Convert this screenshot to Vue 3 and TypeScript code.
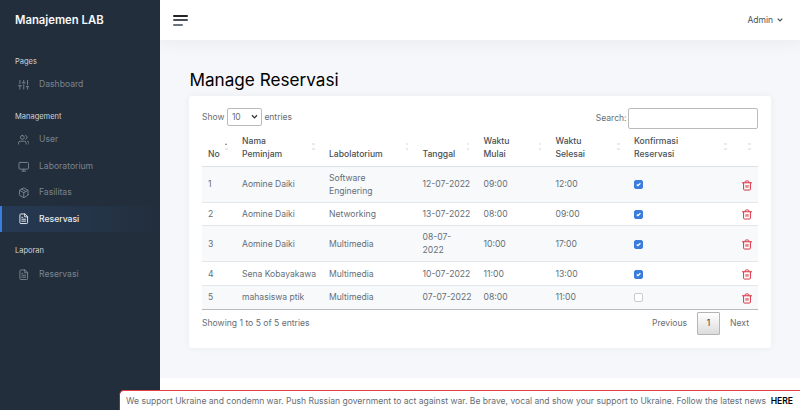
<script setup lang="ts">
type IconName = 'sliders' | 'users' | 'monitor' | 'box' | 'file'

interface NavItem {
  label: string
  icon: IconName
  active?: boolean
}

interface NavGroup {
  title: string
  items: NavItem[]
}

interface Reservation {
  no: number
  name: string
  lab: string
  date: string
  start: string
  end: string
  confirmed: boolean
}

const groups: NavGroup[] = [
  { title: 'Pages', items: [{ label: 'Dashboard', icon: 'sliders' }] },
  {
    title: 'Management',
    items: [
      { label: 'User', icon: 'users' },
      { label: 'Laboratorium', icon: 'monitor' },
      { label: 'Fasilitas', icon: 'box' },
      { label: 'Reservasi', icon: 'file', active: true },
    ],
  },
  { title: 'Laporan', items: [{ label: 'Reservasi', icon: 'file' }] },
]

const icons: Record<IconName, string[]> = {
  sliders: ['M4 21v-7M4 10V3M12 21v-9M12 8V3M20 21v-5M20 12V3M1 14h6M9 8h6M17 16h6'],
  users: [
    'M17 21v-2a4 4 0 0 0-4-4H5a4 4 0 0 0-4 4v2',
    'M9 3a4 4 0 1 0 0 8a4 4 0 1 0 0-8z',
    'M23 21v-2a4 4 0 0 0-3-3.87M16 3.13a4 4 0 0 1 0 7.75',
  ],
  monitor: ['M4 3h16a2 2 0 0 1 2 2v10a2 2 0 0 1-2 2H4a2 2 0 0 1-2-2V5a2 2 0 0 1 2-2z', 'M8 21h8M12 17v4'],
  box: [
    'M16.5 9.4l-9-5.19',
    'M21 16V8a2 2 0 0 0-1-1.73l-7-4a2 2 0 0 0-2 0l-7 4A2 2 0 0 0 3 8v8a2 2 0 0 0 1 1.73l7 4a2 2 0 0 0 2 0l7-4A2 2 0 0 0 21 16z',
    'M3.27 6.96L12 12.01l8.73-5.05M12 22.08V12',
  ],
  file: ['M14 2H6a2 2 0 0 0-2 2v16a2 2 0 0 0 2 2h12a2 2 0 0 0 2-2V8z', 'M14 2v6h6M16 13H8M16 17H8M10 9H8'],
}

const columns: string[] = ['No', 'Nama Peminjam', 'Labolatorium', 'Tanggal', 'Waktu Mulai', 'Waktu Selesai', 'Konfirmasi Reservasi', '']

const rows: Reservation[] = [
  { no: 1, name: 'Aomine Daiki', lab: 'Software Enginering', date: '12-07-2022', start: '09:00', end: '12:00', confirmed: true },
  { no: 2, name: 'Aomine Daiki', lab: 'Networking', date: '13-07-2022', start: '08:00', end: '09:00', confirmed: true },
  { no: 3, name: 'Aomine Daiki', lab: 'Multimedia', date: '08-07-\n2022', start: '10:00', end: '17:00', confirmed: true },
  { no: 4, name: 'Sena Kobayakawa', lab: 'Multimedia', date: '10-07-2022', start: '11:00', end: '13:00', confirmed: true },
  { no: 5, name: 'mahasiswa ptik', lab: 'Multimedia', date: '07-07-2022', start: '08:00', end: '11:00', confirmed: false },
]
</script>

<template>
  <div class="app">
    <aside class="sidebar">
      <div class="brand">Manajemen LAB</div>
      <nav v-for="group in groups" :key="group.title" class="group">
        <div class="group-title">{{ group.title }}</div>
        <a v-for="item in group.items" :key="item.label" class="nav-item" :class="{ active: item.active }">
          <svg class="nav-icon" viewBox="0 0 24 24">
            <path v-for="d in icons[item.icon]" :key="d" :d="d" />
          </svg>
          <span>{{ item.label }}</span>
        </a>
      </nav>
    </aside>

    <div class="main">
      <header class="topbar">
        <div class="burger"><i /><i /><i /></div>
        <div class="admin">
          Admin
          <svg class="chevron" viewBox="0 0 6 4"><path d="M.7.7L3 3L5.3.7" /></svg>
        </div>
      </header>

      <main class="content">
        <h1>Manage Reservasi</h1>
        <section class="card">
          <div class="tools">
            <div class="length">
              <span>Show</span>
              <span class="select">
                10
                <svg class="caret" viewBox="0 0 8 6"><path d="M1 1.3L3.5 3.9L6 1.3" /></svg>
              </span>
              <span>entries</span>
            </div>
            <label class="search">
              <span>Search:</span>
              <input type="text" />
            </label>
          </div>

          <div class="table">
            <div class="row head">
              <div v-for="(column, i) in columns" :key="i" class="cell">
                <span class="head-text">{{ column }}</span>
                <span class="sort" :class="{ asc: i === 0 }"><i /><i /></span>
              </div>
            </div>
            <div v-for="row in rows" :key="row.no" class="row" :class="['r' + row.no, { odd: row.no % 2 === 1 }]">
              <div class="cell">{{ row.no }}</div>
              <div class="cell name">{{ row.name }}</div>
              <div class="cell lab">{{ row.lab }}</div>
              <div class="cell date">{{ row.date }}</div>
              <div class="cell">{{ row.start }}</div>
              <div class="cell">{{ row.end }}</div>
              <div class="cell">
                <span class="check" :class="{ on: row.confirmed }">
                  <svg v-if="row.confirmed" viewBox="0 0 20 20"><path d="M5 10l3.5 3.5l7-7" /></svg>
                </span>
              </div>
              <div class="cell">
                <svg class="trash" viewBox="0 0 22 24">
                  <path d="M0 6h22M18.5 6v14a2 2 0 0 1-2 2h-11a2 2 0 0 1-2-2V6M7 6V4a2 2 0 0 1 2-2h4a2 2 0 0 1 2 2v2M9 11v6M13 11v6" />
                </svg>
              </div>
            </div>
          </div>

          <div class="foot">
            <span class="info">Showing 1 to 5 of 5 entries</span>
            <div class="pager">
              <span>Previous</span>
              <span class="page">1</span>
              <span>Next</span>
            </div>
          </div>
        </section>
      </main>
    </div>

    <div class="banner">
      <span>We support Ukraine and condemn war. Push Russian government to act against war. Be brave, vocal and show your support to Ukraine. Follow the latest news</span>
      <b>HERE</b>
    </div>
  </div>
</template>

<style>
body {
  margin: 0;
  overflow: hidden;
}
</style>

<style scoped>
.app {
  display: flex;
  position: relative;
  width: 800px;
  height: 410px;
  overflow: hidden;
  font-family: Inter, "Liberation Sans", sans-serif;
  font-size: 8.6px;
  line-height: 13px;
  color: #666e76;
  background: #fff;
}

.app *,
.app {
  box-sizing: border-box;
}

svg {
  display: block;
  fill: none;
  stroke: currentColor;
}

.sidebar {
  position: relative;
  z-index: 1;
  flex: none;
  width: 160px;
  background: #222e3c;
}

.brand {
  height: 50px;
  padding: 13px 15px 0;
  font-size: 11.3px;
  font-weight: 600;
  line-height: 15px;
  color: #f8f9fa;
}

.group-title {
  height: 21.4px;
  padding: 5.5px 15px 0;
  font-size: 7.5px;
  line-height: 12px;
  color: #ced4da;
}

.group {
  padding-bottom: 7.6px;
}

.nav-item {
  display: flex;
  align-items: center;
  gap: 10px;
  height: 26.4px;
  padding-left: 15.5px;
  border-left: 2px solid transparent;
  color: #7b848e;
}

.nav-icon {
  width: 11.5px;
  height: 11.5px;
  stroke-width: 2;
  stroke-linecap: round;
  stroke-linejoin: round;
}

.nav-item.active {
  border-left-color: #3b7ddd;
  background: linear-gradient(90deg, rgba(59, 125, 221, 0.14), rgba(59, 125, 221, 0.09) 50%, transparent);
  color: #e9ecef;
}

.nav-item.active span {
  font-weight: 500;
}

.main {
  flex: 1;
  min-width: 0;
}

.topbar {
  position: relative;
  display: flex;
  align-items: center;
  justify-content: space-between;
  height: 40px;
  padding: 0 17.5px 0 13px;
  background: #fff;
  box-shadow: 0 0 20px rgba(33, 37, 41, 0.08);
}

.burger {
  display: grid;
  gap: 2.5px;
}

.burger i {
  width: 15px;
  height: 2px;
  border-radius: 1px;
  background: #495057;
}

.burger i:first-child {
  background: #212529;
}

.burger i:last-child {
  width: 10px;
  background: #6c757d;
}

.admin {
  display: flex;
  align-items: center;
  gap: 3.5px;
  font-size: 8.5px;
  color: #495057;
}

.chevron {
  width: 6px;
  height: 4px;
  stroke-width: 1.2;
}

.content {
  height: 338px;
  padding: 28px 29px 0;
  background: #f5f7fb;
}

h1 {
  height: 27.5px;
  margin: 0;
  padding-left: 0.5px;
  font-size: 17.15px;
  font-weight: 400;
  line-height: 23px;
  color: #000;
}

.card {
  height: 252px;
  padding: 12px 13px 0;
  border-radius: 3px;
  background: #fff;
  box-shadow: 0 0 8px rgba(33, 37, 41, 0.05);
}

.tools {
  display: flex;
  justify-content: space-between;
  height: 21px;
}

.length,
.search {
  display: flex;
  align-items: center;
}

.length {
  height: 18px;
  gap: 2.5px;
  font-size: 8.5px;
}

.length > span:not(.select) {
  padding-top: 1px;
}

.select {
  display: flex;
  align-items: center;
  justify-content: space-between;
  width: 35px;
  height: 18px;
  padding: 1px 2px 0 4px;
  border: 1px solid #bbb;
  border-radius: 2px;
}

.caret {
  width: 8px;
  height: 6px;
  color: #333;
  stroke-width: 1.3;
}

.search {
  gap: 1.5px;
  font-size: 8.5px;
}

.search input {
  width: 130px;
  height: 21px;
  border: 1px solid #bbb;
  border-radius: 2px;
  background: #fff;
}

.row {
  display: grid;
  grid-template-columns: 34px 87px 93.5px 61px 72px 78.5px 107px 1fr;
  align-items: center;
  height: 23.6px;
  border-bottom: 1px solid #e4e7ea;
}

.cell {
  padding-top: 1px;
  padding-left: 6px;
}

.row.head {
  align-items: end;
  height: 38px;
  font-weight: 500;
  color: #495057;
  border-bottom-color: #dee2e6;
}

.head .cell {
  position: relative;
  height: 100%;
  display: flex;
  align-items: end;
  padding-right: 18px;
  padding-bottom: 5px;
}

.sort {
  position: absolute;
  right: 8.5px;
  top: 14px;
  display: grid;
  gap: 3px;
}

.sort i {
  width: 2.5px;
  height: 2px;
  background: #e8eaec;
}

.sort.asc i:first-child {
  width: 0;
  height: 0;
  border: 1.5px solid transparent;
  border-top: 0;
  border-bottom: 2px solid #777;
  background: none;
}

.odd {
  background: #f7f9fb;
}

.row.r1,
.row.r3 {
  height: 36.2px;
}

.row.r5 {
  border-bottom-color: #b9bcbf;
}

.name {
  white-space: nowrap;
  font-size: 8.55px;
}

.lab {
  padding-right: 18px;
}

.date {
  white-space: pre;
}

.check {
  display: block;
  width: 9px;
  height: 9px;
  border: 1px solid #c8cacc;
  border-radius: 2px;
  background: #fff;
}

.check.on {
  border-color: #3b7ddd;
  background: #3b7ddd;
  color: #fff;
}

.check svg {
  width: 7px;
  height: 7px;
  stroke-width: 3.5;
}

.trash {
  width: 10px;
  height: 11px;
  margin-top: 1px;
  margin-left: 0.5px;
  stroke-width: 2.2;
  color: #dc3545;
}

.foot {
  display: flex;
  justify-content: space-between;
  padding-top: 2.5px;
}

.info {
  padding-top: 5px;
}

.pager {
  display: flex;
  align-items: center;
  height: 23px;
  gap: 10px;
  padding-right: 9px;
}

.page {
  width: 23px;
  height: 23px;
  border: 1px solid #b5b5b5;
  border-radius: 1px;
  background: linear-gradient(#fff, #dcdcdc);
  line-height: 21px;
  text-align: center;
  color: #333;
}

.banner {
  position: absolute;
  z-index: 2;
  left: 119px;
  top: 390px;
  display: flex;
  align-items: center;
  justify-content: space-between;
  width: 682px;
  height: 24px;
  padding: 0 7px 2px 6px;
  border: 1px solid #dd4046;
  border-left: 1.5px solid #b81c22;
  border-radius: 5px 0 0 0;
  background: #fff;
  font-size: 8.57px;
  white-space: nowrap;
}

.banner b {
  font-weight: 600;
  color: #000;
}
</style>
